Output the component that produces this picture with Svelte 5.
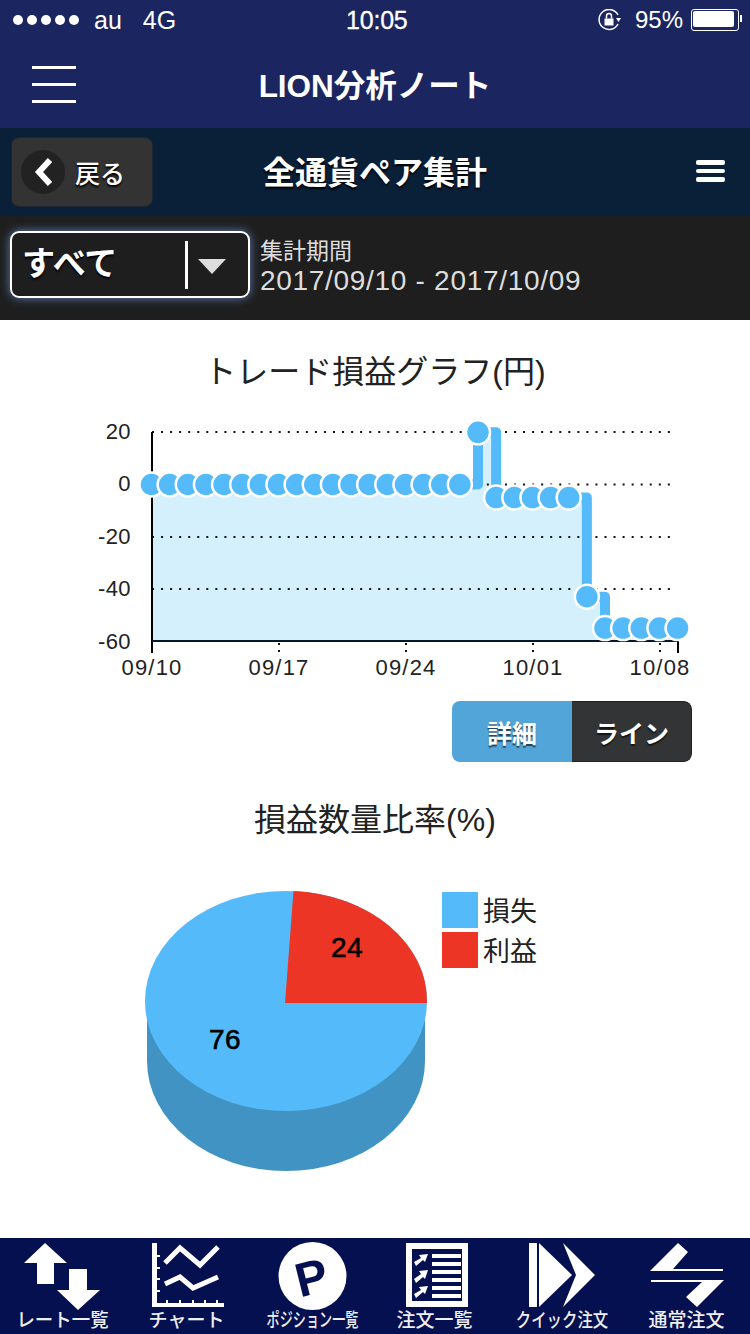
<script lang="ts">
	// daily profit series, 09/10 - 10/09
	const values = [
		0, 0, 0, 0, 0, 0, 0, 0, 0, 0, 0, 0, 0, 0, 0, 0, 0, 0, 20, -5, -5, -5, -5, -5, -43, -55, -55, -55, -55, -55
	];

	const xAt = (i: number) => 151.5 + i * 18.14;
	const yAt = (v: number) => 484.5 - v * 2.61;

	const points = values.map((v, i) => ({ x: xAt(i), y: yAt(v) }));

	let stepLine = `M${points[0].x} ${points[0].y}`;
	for (let i = 1; i < points.length; i++) {
		stepLine += ` H${points[i].x} V${points[i].y}`;
	}
	const area = `${stepLine} V641 H${points[0].x} Z`;

	const grid = [432, 484.5, 537, 589];
	const yLabels = [
		{ text: '20', y: 439 },
		{ text: '0', y: 491 },
		{ text: '-20', y: 544 },
		{ text: '-40', y: 596 },
		{ text: '-60', y: 649 }
	];
	const xLabels = [
		{ text: '09/10', x: 152 },
		{ text: '09/17', x: 279 },
		{ text: '09/24', x: 406 },
		{ text: '10/01', x: 533 },
		{ text: '10/08', x: 660 }
	];

	// labels are squeezed to fit the tab in the app
	const tabs = [
		{ label: 'レート一覧', squeeze: 0.97, shift: 0 },
		{ label: 'チャート', squeeze: 1, shift: -1 },
		{ label: 'ポジション一覧', squeeze: 0.69, shift: 0 },
		{ label: '注文一覧', squeeze: 1, shift: -3 },
		{ label: 'クイック注文', squeeze: 0.81, shift: 0 },
		{ label: '通常注文', squeeze: 1, shift: -1 }
	];
</script>

<div class="page">
	<header class="top">
		<div class="status">
			<div class="status-left">
				<span class="dots">
					{#each [0, 1, 2, 3, 4] as d (d)}
						<i></i>
					{/each}
				</span>
				<span class="carrier">au</span>
				<span class="net">4G</span>
			</div>
			<div class="time">10:05</div>
			<div class="status-right">
				<svg class="lock" width="24" height="22" viewBox="0 0 24 22">
					<path d="M20 15 A10 10 0 1 1 20 6" fill="none" stroke="#fff" stroke-width="1.5" />
					<path d="M18 9 L23 9 L20.5 13 Z" fill="#fff" />
					<rect x="6.5" y="9.5" width="9" height="7" fill="#fff" />
					<path d="M8.5 9.5 V7 a2.5 2.5 0 0 1 5 0 V9.5" fill="none" stroke="#fff" stroke-width="1.5" />
				</svg>
				<span class="pct">95%</span>
				<span class="battery"><b></b></span>
			</div>
		</div>
		<div class="nav">
			<div class="burger"><i></i><i></i><i></i></div>
			<h1>LION分析ノート</h1>
		</div>
	</header>

	<div class="subbar">
		<button class="back">
			<span class="back-circle">
				<svg width="22" height="30" viewBox="0 0 22 30">
					<path d="M18 3 L7 15 L18 27" fill="none" stroke="#fff" stroke-width="6" />
				</svg>
			</span>
			戻る
		</button>
		<h2>全通貨ペア集計</h2>
		<div class="menu"><i></i><i></i><i></i></div>
	</div>

	<div class="filter">
		<div class="select">
			<span class="select-text">すべて</span>
			<span class="divider"></span>
			<span class="caret"></span>
		</div>
		<div class="period">
			<div class="period-label">集計期間</div>
			<div class="period-dates">2017/09/10 - 2017/10/09</div>
		</div>
	</div>

	<main class="content">
		<h3 class="title-line">トレード損益グラフ(円)</h3>

		<svg class="line-chart" width="750" height="290" viewBox="0 410 750 290">
			<path d={area} fill="#d3f0fc" />
			{#each grid as y (y)}
				<line x1="152" x2="676" y1={y} y2={y} stroke="#111" stroke-width="2" stroke-dasharray="2 7.05" />
			{/each}
			<line x1="152" x2="152" y1="432" y2="653" stroke="#000" stroke-width="2" />
			<line x1="152" x2="678" y1="641" y2="641" stroke="#05172a" stroke-width="2" />
			<line x1="678" x2="678" y1="641" y2="653" stroke="#000" stroke-width="2" />
			{#each xLabels.slice(1) as t (t.text)}
				<line x1={t.x} x2={t.x} y1="643" y2="652" stroke="#111" stroke-width="2" stroke-dasharray="2 5" />
			{/each}
			<path d={stepLine} fill="none" stroke="#55baf9" stroke-width="10" stroke-linejoin="round" />
			{#each points as p, i (i)}
				<circle cx={p.x} cy={p.y} r="12" fill="#55baf9" stroke="#fff" stroke-width="2.5" />
			{/each}
			{#each yLabels as t (t.text)}
				<text class="axis" x="131" y={t.y} text-anchor="end">{t.text}</text>
			{/each}
			{#each xLabels as t (t.text)}
				<text class="axis date" x={t.x} y="675" text-anchor="middle">{t.text}</text>
			{/each}
		</svg>

		<div class="toggle-row">
			<div class="toggle">
				<span class="on">詳細</span>
				<span class="off">ライン</span>
			</div>
		</div>

		<h3 class="title-pie">損益数量比率(%)</h3>

		<div class="pie-row">
			<svg class="pie" width="290" height="284" viewBox="142 889 290 284">
				<path d="M147 1003 V1061 A139 110 0 0 0 425 1061 V1003 Z" fill="#4093c2" />
				<ellipse cx="286" cy="1001" rx="141" ry="110" fill="#55baf9" />
				<path d="M285 1003 L293.5 891 A141 110 0 0 1 427 1003 Z" fill="#ec3524" />
				<text class="pie-num" x="347" y="957" text-anchor="middle">24</text>
				<text class="pie-num" x="225" y="1049" text-anchor="middle">76</text>
			</svg>
			<div class="legend">
				<div class="legend-item"><span class="swatch loss"></span>損失</div>
				<div class="legend-item"><span class="swatch gain"></span>利益</div>
			</div>
		</div>
	</main>

	<nav class="tabs">
		{#each tabs as tab, i (tab.label)}
			<div class="tab">
				<svg width="125" height="71" viewBox="0 0 125 71" fill="#fff">
					{#if i === 0}
						<path d="M45 5 L67 25 H54 V46 H37 V25 H24 Z" />
						<path d="M69 31 H87 V52 H100 L78 72 L57 52 H69 Z" />
					{:else if i === 1}
						<path d="M27 5 H32 V65 H99 V69 H27 Z" />
						<path d="M32 17 H35 V19 H32 Z M32 29 H35 V31 H32 Z M32 40 H35 V42 H32 Z M32 52 H35 V54 H32 Z" />
						<path d="M41 62 H43 V65 H41 Z M54 62 H56 V65 H54 Z M67 62 H69 V65 H67 Z M79 62 H81 V65 H79 Z M91 62 H93 V65 H91 Z" />
						<path d="M40 25 L55 10 L75 27 L93 9" fill="none" stroke="#fff" stroke-width="5" />
						<path d="M40 46 L55 39 L68 50 L93 39" fill="none" stroke="#fff" stroke-width="5" />
					{:else if i === 2}
						<circle cx="62.5" cy="38" r="34" />
						<text class="p-mark" x="62" y="56" text-anchor="middle" transform="rotate(-14 62 41)">P</text>
					{:else if i === 3}
						<rect x="34" y="8" width="56" height="58" fill="none" stroke="#fff" stroke-width="6" />
						<path d="M57 16 H86 V20 H57 Z M57 24 H86 V28 H57 Z M57 32 H86 V36 H57 Z M57 40 H86 V44 H57 Z M57 48 H86 V52 H57 Z M57 56 H86 V60 H57 Z" />
						<path d="M39 24 L46 20 L44 17 L53 16 L50 24 L48 22 L41 28 Z" />
						<path d="M39 41 L46 36 L44 33 L53 32 L50 41 L48 39 L41 45 Z" />
						<path d="M39 56 L46 52 L44 49 L53 48 L50 56 L48 54 L41 60 Z" />
					{:else if i === 4}
						<path d="M29 5 H37 V69 H29 Z" />
						<path d="M39 5 L72 37 L39 69 Z" />
						<path d="M63 5 L95 37 L63 69 L76 37 Z" />
					{:else}
						<path d="M53 5 L63 14 L48 31 H98 V33 H25 Z" />
						<path d="M26 42 H99 L72 69 L61 59 L77 44 H26 Z" />
					{/if}
				</svg>
				<span style="transform: translateX({tab.shift}px) scaleX({tab.squeeze})">{tab.label}</span>
			</div>
		{/each}
	</nav>
</div>

<style>
	:global(body) {
		margin: 0;
		background: #fff;
	}

	.page {
		width: 750px;
		height: 1334px;
		display: flex;
		flex-direction: column;
		overflow: hidden;
		font-family: 'Liberation Sans', 'Noto Sans CJK JP', sans-serif;
	}

	/* status + title */
	.top {
		height: 128px;
		background: #1b2560;
		color: #fff;
	}

	.status {
		height: 40px;
		display: grid;
		grid-template-columns: 1fr auto 1fr;
		align-items: center;
		font-size: 25px;
		padding: 0 11px 0 13px;
	}

	.status-left {
		display: flex;
		align-items: center;
	}

	.dots {
		display: flex;
		gap: 4px;
		margin-right: 15px;
	}

	.dots i {
		width: 10px;
		height: 10px;
		border-radius: 50%;
		background: #fff;
	}

	.net {
		margin-left: 21px;
	}

	.time {
		font-size: 25px;
		width: 60px;
		letter-spacing: -0.2px;
		white-space: nowrap;
		-webkit-text-stroke: 0.3px #fff;
	}

	.status-right {
		display: flex;
		align-items: center;
		justify-content: flex-end;
	}

	.lock {
		margin-right: 13px;
	}

	.pct {
		font-size: 24px;
		margin-right: 8px;
	}

	.battery {
		width: 44px;
		height: 18px;
		border: 1px solid #fff;
		border-radius: 3px;
		padding: 1px;
		display: block;
		position: relative;
	}

	.battery b {
		display: block;
		width: 41px;
		height: 16px;
		background: #fff;
		border-radius: 2px;
	}

	.battery::after {
		content: '';
		position: absolute;
		right: -4px;
		top: 5px;
		width: 2px;
		height: 7px;
		background: #fff;
	}

	.nav {
		height: 88px;
		position: relative;
		display: flex;
		align-items: center;
		justify-content: center;
	}

	h1 {
		margin: -3px 0 0;
		font-size: 31.5px;
		font-weight: 700;
		color: #fff;
	}

	.burger {
		position: absolute;
		left: 32px;
		top: 26px;
		width: 44px;
		display: flex;
		flex-direction: column;
		gap: 14px;
	}

	.burger i {
		height: 3px;
		background: #fff;
	}

	/* sub header */
	.subbar {
		height: 88px;
		background: #0a2039;
		display: flex;
		align-items: center;
		justify-content: center;
		position: relative;
	}

	h2 {
		margin: -4px 0 0;
		font-size: 32px;
		font-weight: 700;
		color: #fff;
		text-shadow: 0 2px 2px #000;
	}

	.back {
		position: absolute;
		left: 11px;
		top: 9px;
		width: 142px;
		height: 70px;
		box-sizing: border-box;
		background: #333;
		border: 1px solid #1c2530;
		border-radius: 8px;
		display: flex;
		align-items: center;
		gap: 10px;
		padding: 0 0 0 10px;
		color: #fff;
		font: 500 25px 'Liberation Sans', 'Noto Sans CJK JP', sans-serif;
		text-shadow: 0 2px 2px #000;
	}

	.back-circle {
		width: 44px;
		height: 44px;
		border-radius: 50%;
		background: #222;
		display: flex;
		align-items: center;
		justify-content: center;
		margin-left: -1px;
	}

	.menu {
		position: absolute;
		right: 25px;
		top: 32px;
		width: 29px;
		display: flex;
		flex-direction: column;
		gap: 4px;
	}

	.menu i {
		height: 4.5px;
		border-radius: 2px;
		background: #fff;
	}

	/* filter */
	.filter {
		height: 104px;
		background: #1e1e1e;
		display: flex;
		align-items: center;
		padding-left: 10px;
		box-sizing: border-box;
		gap: 10px;
	}

	.select {
		align-self: flex-start;
		margin-top: 15px;
		width: 240px;
		height: 67px;
		box-sizing: border-box;
		border: 2px solid #fff;
		border-radius: 9px;
		box-shadow: 0 0 10px #5f80b8;
		display: flex;
		align-items: center;
		color: #fff;
	}

	.select-text {
		font-size: 33px;
		font-weight: 700;
		width: 160px;
		padding-left: 10px;
		margin-top: -8px;
		box-sizing: border-box;
		white-space: nowrap;
		text-shadow: 0 2px 2px #000;
	}

	.divider {
		width: 3px;
		height: 48px;
		background: #fff;
		margin-left: 13px;
	}

	.caret {
		width: 0;
		height: 0;
		margin-left: 10px;
		margin-top: 3px;
		border-left: 14px solid transparent;
		border-right: 14px solid transparent;
		border-top: 15px solid #ddd;
	}

	.period {
		color: #ddd;
		line-height: 30px;
		margin-top: -4px;
	}

	.period-label {
		font-size: 23px;
	}

	.period-dates {
		font-size: 28px;
		letter-spacing: 0.7px;
		white-space: nowrap;
	}

	/* charts */
	.content {
		flex: 1;
		background: #fff;
		display: flex;
		flex-direction: column;
	}

	h3 {
		margin: 0;
		font-size: 32px;
		font-weight: 400;
		line-height: 40px;
		color: #222;
		text-align: center;
	}

	.title-line {
		margin-top: 32px;
		margin-bottom: 18px;
	}

	.line-chart {
		display: block;
	}

	.axis {
		font-size: 22px;
		fill: #222;
		letter-spacing: 0.4px;
	}

	.date {
		letter-spacing: 1.2px;
	}

	.toggle-row {
		display: flex;
		justify-content: flex-end;
		padding-right: 58px;
		margin-top: 1px;
	}

	.toggle {
		display: flex;
		width: 240px;
		height: 61px;
		border-radius: 8px;
		overflow: hidden;
		color: #fff;
		font-size: 25px;
		font-weight: 700;
	}

	.toggle span {
		display: flex;
		align-items: center;
		justify-content: center;
		text-shadow: 0 2px 1px rgba(0, 0, 0, 0.6);
	}

	.on {
		width: 120px;
		background: #52a5d8;
	}

	.off {
		width: 120px;
		background: #333436;
		border: 1px solid #222;
		border-left: 0;
		border-radius: 0 8px 8px 0;
		box-sizing: border-box;
	}

	.title-pie {
		margin-top: 38px;
	}

	.pie-row {
		display: flex;
		align-items: flex-start;
		margin-top: 49px;
		padding-left: 142px;
	}

	.pie {
		display: block;
		flex: none;
	}

	.pie-num {
		font-size: 28px;
		fill: #000;
		stroke: #000;
		stroke-width: 0.6px;
		letter-spacing: 0.5px;
	}

	.legend {
		display: flex;
		flex-direction: column;
		gap: 4px;
		margin-left: 10px;
		margin-top: 3px;
	}

	.legend-item {
		display: flex;
		align-items: center;
		gap: 5px;
		height: 36px;
		font-size: 27px;
		color: #222;
		margin-top: -1px;
		margin-bottom: 1px;
	}

	.swatch {
		width: 36px;
		height: 36px;
		position: relative;
		top: 1px;
	}

	.loss {
		background: #55baf9;
	}

	.gain {
		background: #ec3524;
	}

	/* bottom tabs */
	.tabs {
		height: 96px;
		background: #051050;
		display: flex;
		flex: none;
	}

	.tab {
		width: 125px;
		display: flex;
		flex-direction: column;
		align-items: center;
		color: #eee;
		font-size: 19px;
		font-weight: 500;
		white-space: nowrap;
	}

	.tab svg {
		display: block;
		overflow: visible;
	}

	.tab span {
		line-height: 22px;
		margin-top: 1px;
	}

	.p-mark {
		font-size: 48px;
		font-weight: 700;
		fill: #051050;
	}
</style>
